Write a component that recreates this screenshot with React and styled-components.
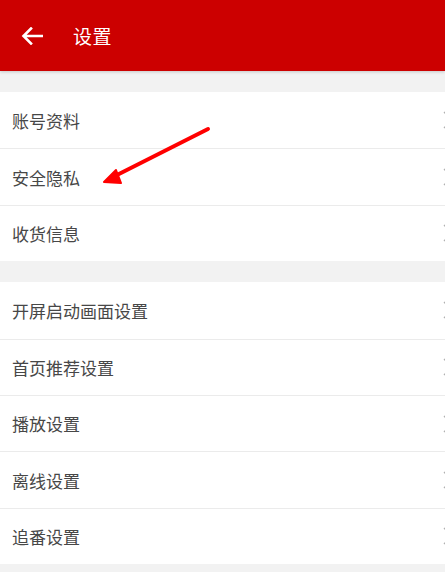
import React from "react"
import styled, { createGlobalStyle } from "styled-components"

const GlobalStyle = createGlobalStyle`
  html, body {
    margin: 0;
    padding: 0;
    overflow: hidden;
    background: #f2f2f2;
    font-family: "Noto Sans CJK SC", "Noto Sans", sans-serif;
  }
`

const Page = styled.div`
  position: relative;
  width: 445px;
  height: 572px;
  background: #f2f2f2;
  overflow: hidden;
`

const Header = styled.header`
  height: 71px;
  background: #cc0000;
  display: flex;
  align-items: center;
  padding-left: 21px;
  gap: 30px;
  box-shadow: 0 1px 3px rgba(0, 0, 0, 0.18);
`

const Title = styled.h1`
  margin: 0;
  font-size: 19px;
  font-weight: 400;
  color: #fff;
  letter-spacing: 0.5px;
`

const Group = styled.div`
  background: #fff;
  margin-top: 21px;
`

const Row = styled.div`
  height: 56.4px;
  box-sizing: border-box;
  display: flex;
  align-items: center;
  justify-content: space-between;
  padding-left: 12px;
  border-top: ${({ divided }) => (divided ? "1px solid #ebebeb" : "none")};
`

const Label = styled.span`
  font-size: 17px;
  color: #474747;
`

const Chevron = styled.svg`
  width: 10px;
  height: 18px;
  margin-right: -8px;
  flex-shrink: 0;
`

const Pointer = styled.svg`
  position: absolute;
  left: 0;
  top: 0;
  pointer-events: none;
`

const groups = [
  ["账号资料", "安全隐私", "收货信息"],
  ["开屏启动画面设置", "首页推荐设置", "播放设置", "离线设置", "追番设置"],
]

export default function App() {
  return (
    <Page>
      <GlobalStyle />
      <Header>
        <svg width="22" height="18" viewBox="0 0 22 18">
          <path d="M21 9H3M10 1.5L2.5 9l7.5 7.5" fill="none" stroke="#fff" strokeWidth="2.6" strokeLinecap="square" />
        </svg>
        <Title>设置</Title>
      </Header>
      {groups.map((items, gi) => (
        <Group key={gi}>
          {items.map((label, i) => (
            <Row key={label} divided={i > 0}>
              <Label>{label}</Label>
              <Chevron viewBox="0 0 10 18">
                <path d="M1 1l8 8-8 8" fill="none" stroke="#b0b0b0" strokeWidth="1.3" />
              </Chevron>
            </Row>
          ))}
        </Group>
      ))}
      <Pointer width="445" height="572" viewBox="0 0 445 572">
        <path d="M208 129L113 177" stroke="#ff0000" strokeWidth="4" strokeLinecap="round" />
        <path d="M104 182L116 170L121 183Z" fill="#ff0000" stroke="#ff0000" strokeWidth="2" strokeLinejoin="round" />
      </Pointer>
    </Page>
  )
}
